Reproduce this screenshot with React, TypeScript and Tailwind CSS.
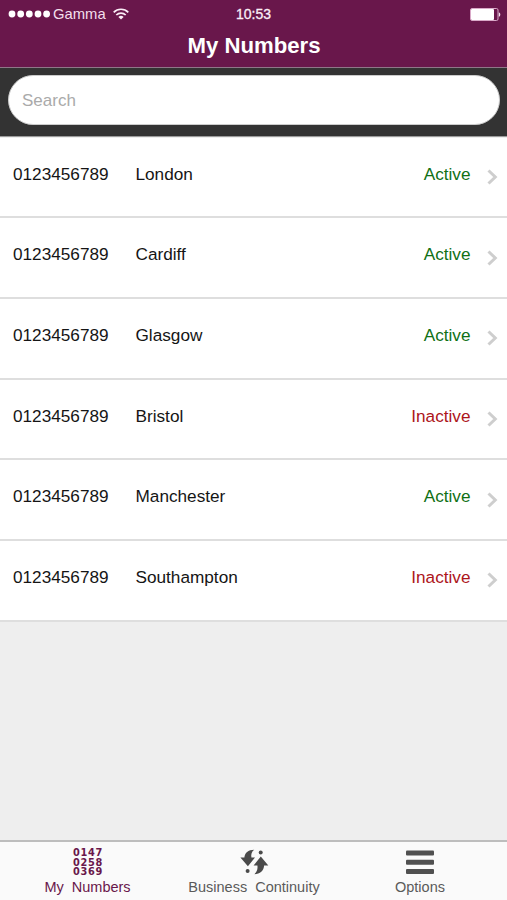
import React, { useState } from 'react';

interface PhoneNumber {
  number: string;
  name: string;
  active: boolean;
}

const NUMBERS: PhoneNumber[] = [
  { number: '0123456789', name: 'London', active: true },
  { number: '0123456789', name: 'Cardiff', active: true },
  { number: '0123456789', name: 'Glasgow', active: true },
  { number: '0123456789', name: 'Bristol', active: false },
  { number: '0123456789', name: 'Manchester', active: true },
  { number: '0123456789', name: 'Southampton', active: false },
];

const StatusBar: React.FC = () => (
  <div className="grid h-[27px] grid-cols-3 items-center text-[14px] leading-[27px]">
    <div className="flex items-center pl-2">
      <svg width="43" height="8" viewBox="0 0 43 8" fill="currentColor">
        <circle cx="4" cy="4" r="3.4" />
        <circle cx="12.7" cy="4" r="3.4" />
        <circle cx="21.3" cy="4" r="3.4" />
        <circle cx="30" cy="4" r="3.4" />
        <circle cx="38.6" cy="4" r="3.4" />
      </svg>
      <span className="ml-[2px] w-[53px] pt-px text-[14.8px] text-[#f3dfec]">Gamma</span>
      <svg className="ml-[7px] -mt-px" width="16" height="12" viewBox="0 0 16 12" fill="none" stroke="#fbeef7" strokeWidth="1.7">
        <path d="M.7 4.3a10.3 10.3 0 0 1 14.6 0" />
        <path d="M3.3 7a6.6 6.6 0 0 1 9.4 0" />
        <path d="M8 11.6 5.4 9a3.8 3.8 0 0 1 5.2 0Z" fill="#fbeef7" stroke="none" />
      </svg>
    </div>
    <span className="pt-px text-center font-medium text-[#fbeef7] [-webkit-text-stroke:0.3px]">10:53</span>
    <svg className="ml-auto mr-[6px]" width="31" height="13" viewBox="0 0 31 13">
      <rect x=".5" y=".5" width="27.5" height="12" rx="1.5" fill="none" stroke="#d9a9c8" />
      <rect x="1" y="1" width="23" height="11" rx="1" fill="#fff" />
      <path d="M28.8 4.2c2 .8 2 3.8 0 4.6Z" fill="#f3dfec" />
    </svg>
  </div>
);

const NumberRow: React.FC<{ item: PhoneNumber }> = ({ item }) => (
  <li className="flex h-[80.7px] items-center border-b-2 border-[#dedede] bg-white pl-[13px] pr-[9px] text-[17.2px]">
    <span className="w-[122.5px] pb-[5px]">{item.number}</span>
    <span className="flex-1 pb-[5px]">{item.name}</span>
    <span className={`pb-[5px] ${item.active ? 'text-[#107015]' : 'text-[#ad151b]'}`}>
      {item.active ? 'Active' : 'Inactive'}
    </span>
    <svg className="ml-[16.5px]" width="11" height="16" viewBox="0 0 11 16" fill="none" stroke="#cecece" strokeWidth="3">
      <path d="m1.5 1.5 6.8 6.5-6.8 6.5" />
    </svg>
  </li>
);

const ContinuityIcon: React.FC = () => (
  <svg width="29" height="26" viewBox="0 0 29 26" fill="#4a4a4a">
    <path d="M14.2.8C8.2.8 4.6 4 4.4 8.6H.4l7.5 8.6L15 8.6h-3.6c-.5-3.2.2-5.9 2.8-7.8Z" />
    <path d="M14.2 25.2c6 0 9.7-3.4 9.9-8.6h4.2L20.8 7.4l-7.2 9.2h3.8c.5 3.4-.4 6.6-3.2 8.6Z" />
    <circle cx="7.6" cy="22" r="2" />
    <circle cx="20.7" cy="3.4" r="2" />
  </svg>
);

export default function App() {
  const [query, setQuery] = useState('');
  const visible = NUMBERS.filter((n) => n.name.toLowerCase().includes(query.toLowerCase()));

  return (
    <div className="flex h-[900px] w-[507px] flex-col overflow-hidden bg-[#eee] font-['Liberation_Sans',Arial,sans-serif] text-[#151515]">
      <header className="h-[68px] shrink-0 border-b border-[#8f7788] bg-[#69174b] text-white">
        <StatusBar />
        <h1 className="pl-px text-center text-[22.2px] leading-[38px] font-bold">My Numbers</h1>
      </header>

      <div className="h-[69px] shrink-0 border-b border-[#9b9b9b] bg-[#333] pt-[7px] pr-[7px] pl-2">
        <input
          type="text"
          value={query}
          onChange={(e) => setQuery(e.target.value)}
          placeholder="Search"
          className="h-[50px] w-full rounded-full border border-[#ccc] bg-white px-[13px] pt-[2px] text-[17px] outline-none placeholder:text-[#aaa]"
        />
      </div>

      <ul className="flex-1 pt-[0.7px]">
        {visible.map((item) => (
          <NumberRow key={item.name} item={item} />
        ))}
      </ul>

      <nav className="flex h-[60px] shrink-0 border-t-2 border-[#bdbdbd] bg-[#fafafa] pl-[4px] text-[14.5px] leading-[18px] text-[#5a5a5a]">
        <button className="flex w-[167px] flex-col items-center text-[#69174b]">
          <span className="mt-[6px] flex h-[30px] flex-col pl-px font-['DejaVu_Sans',sans-serif] text-[9.8px] leading-[9.6px] font-bold tracking-[0.7px]">
            <span>0147</span>
            <span>0258</span>
            <span>0369</span>
          </span>
          <span className="[word-spacing:4px]">My Numbers</span>
        </button>
        <button className="flex w-[166px] flex-col items-center">
          <span className="mt-[7px] h-[29px]">
            <ContinuityIcon />
          </span>
          <span className="[word-spacing:4px]">Business Continuity</span>
        </button>
        <button className="flex w-[166px] flex-col items-center">
          <svg className="mt-[7px] mb-[4px]" width="28" height="25" viewBox="0 0 28 25" fill="#505050">
            <rect y="1.5" width="28" height="5" rx="1" />
            <rect y="10.7" width="28" height="5" rx="1" />
            <rect y="20" width="28" height="5" rx="1" />
          </svg>
          <span>Options</span>
        </button>
      </nav>
    </div>
  );
}
